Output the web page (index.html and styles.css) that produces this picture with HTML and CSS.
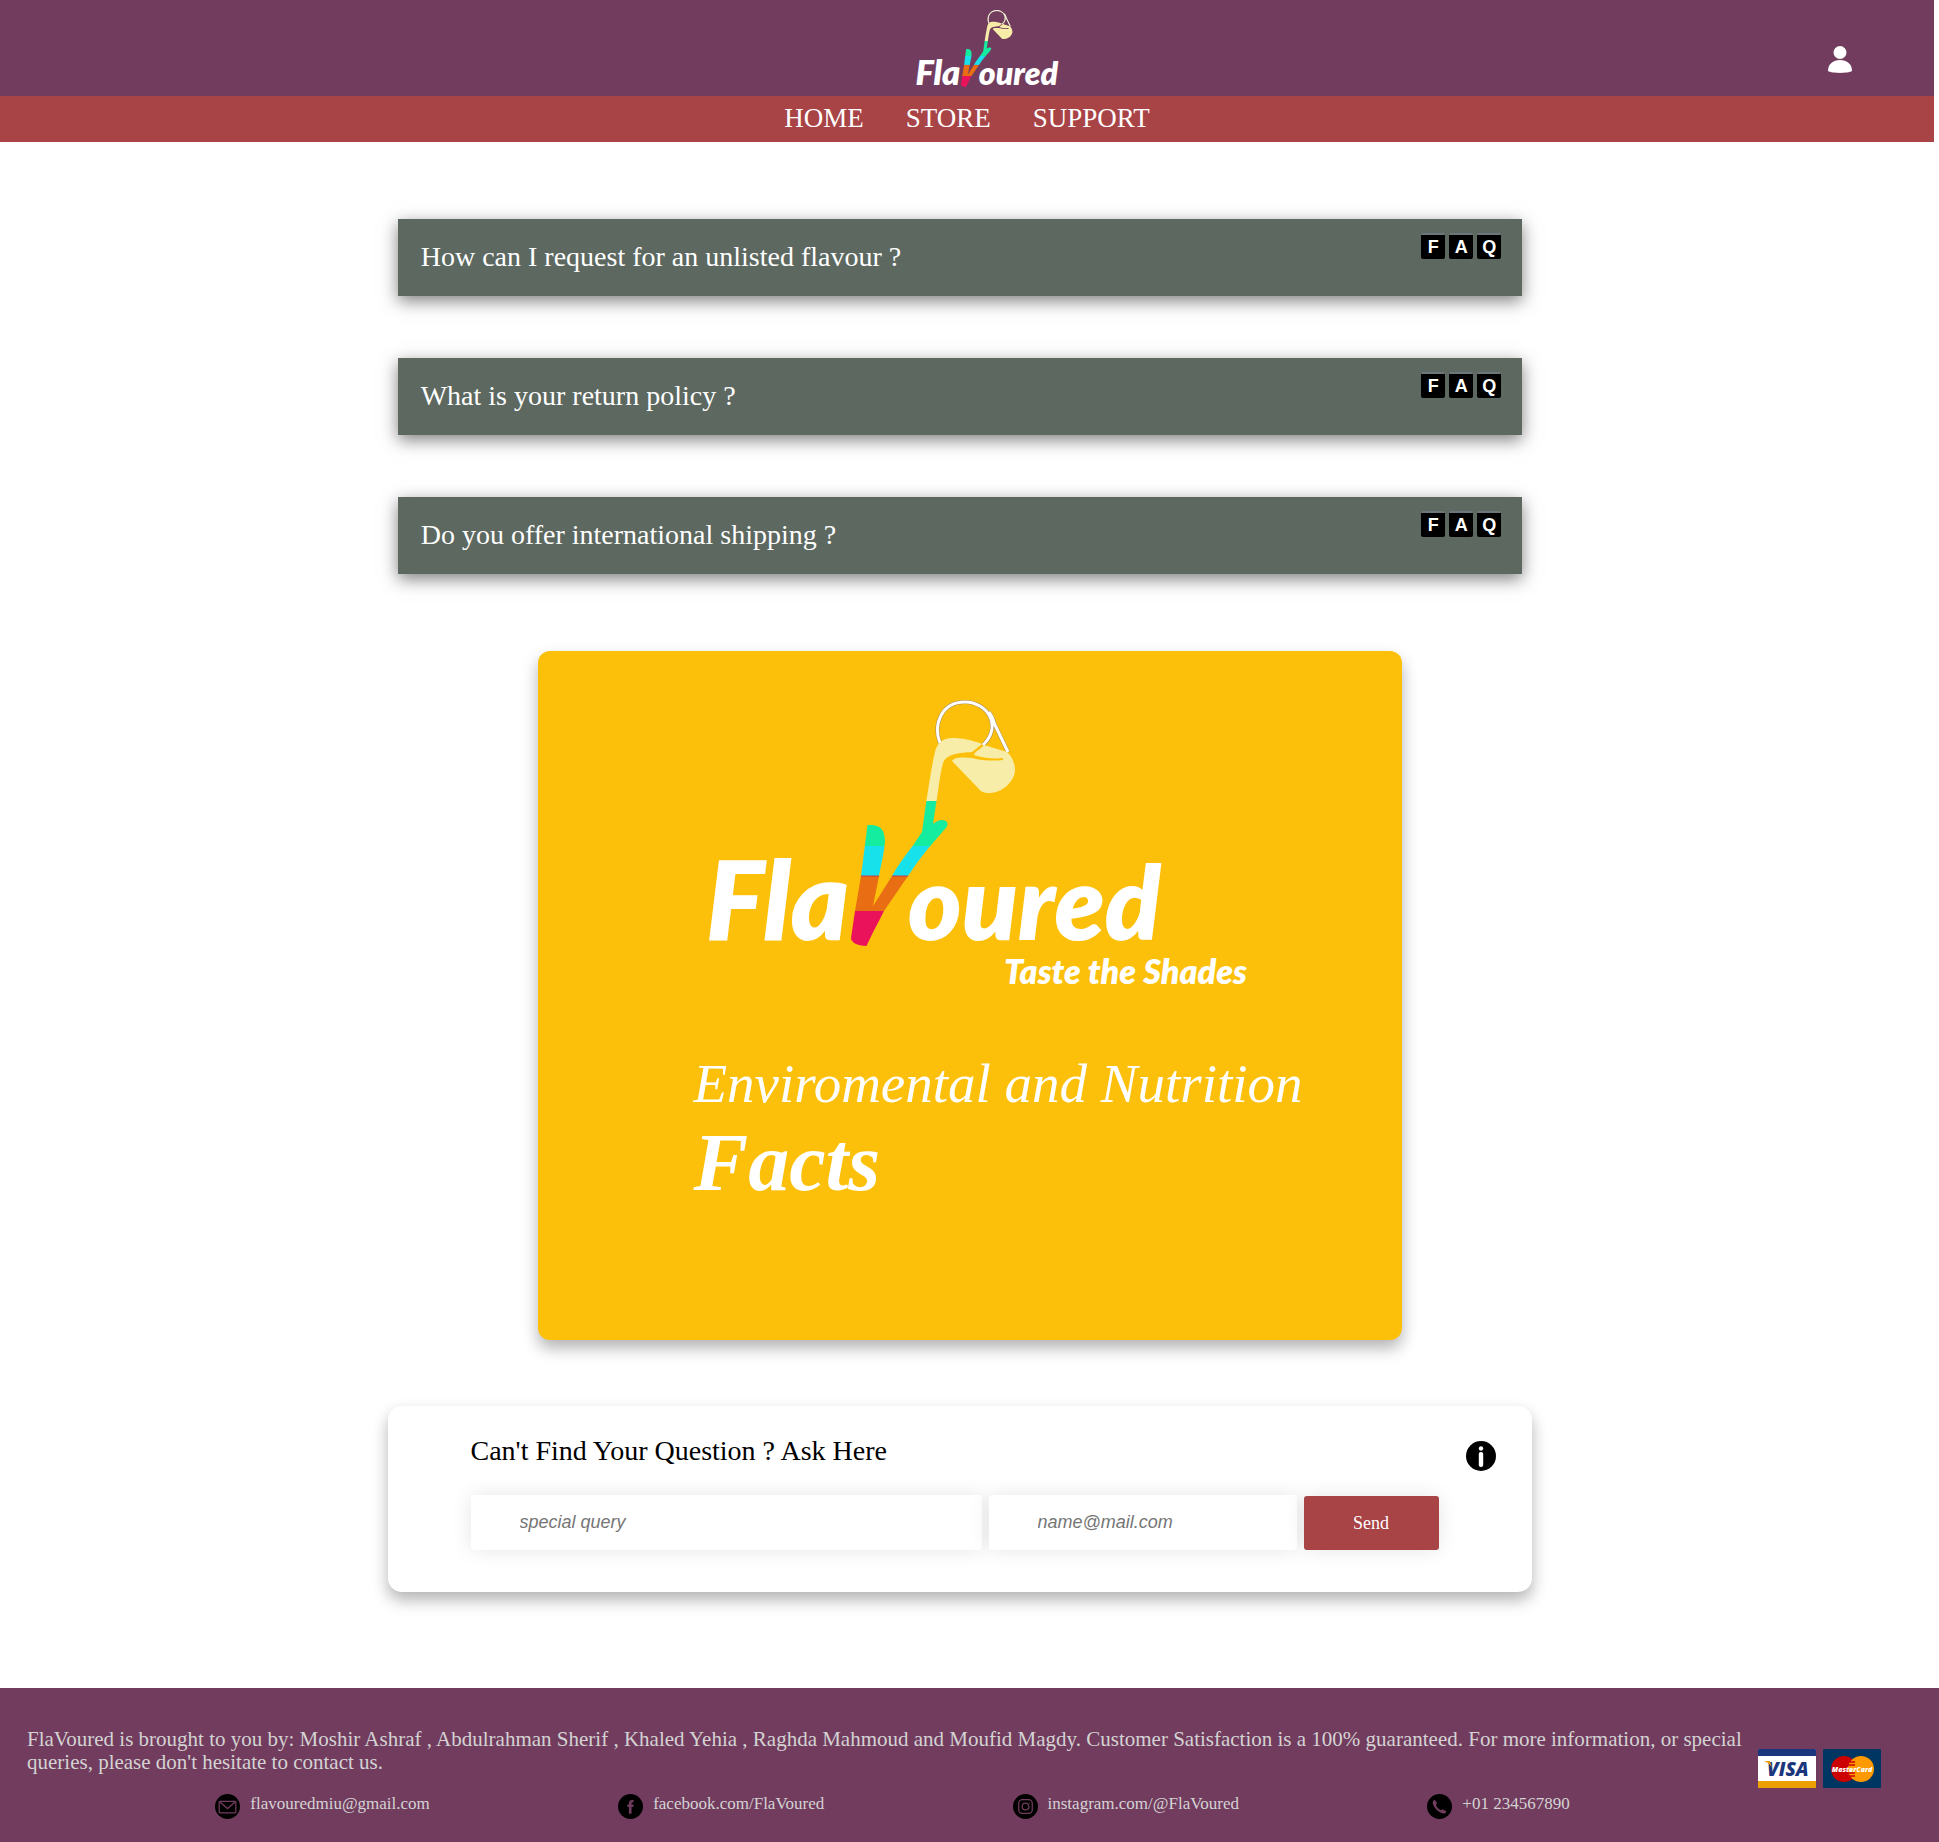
FILE: index.html
```html
<!DOCTYPE html>
<html lang="en">
<head>
<meta charset="utf-8">
<title>FlaVoured - Support</title>
<link rel="stylesheet" href="styles.css">
</head>
<body>
<svg class="sprite" width="0" height="0" aria-hidden="true">
  <defs>
    <linearGradient id="bands" gradientUnits="userSpaceOnUse" x1="0" y1="0" x2="0" y2="260">
      <stop offset="0.41" stop-color="#f8eda8"/>
      <stop offset="0.41" stop-color="#14eca0"/>
      <stop offset="0.583" stop-color="#14eca0"/>
      <stop offset="0.583" stop-color="#17e2ec"/>
      <stop offset="0.7" stop-color="#17e2ec"/>
      <stop offset="0.7" stop-color="#e86d13"/>
      <stop offset="0.833" stop-color="#e86d13"/>
      <stop offset="0.833" stop-color="#ea125a"/>
    </linearGradient>
    <symbol id="wordmark" viewBox="0 0 562 300" overflow="visible">
      <path fill="none" stroke="#a08a60" stroke-width="4" d="M240 49C233 31 241 8 265 8C287 8 303 32 283 51M289 18C292 22 294 27 295 31L308 58"/>
      <path fill="none" stroke="#fff" stroke-width="3" d="M240 49C233 31 241 8 265 8C287 8 303 32 283 51M289 18C292 22 294 27 295 31L308 58"/>
      <path fill="url(#bands)" d="M167.500 131C180 130 185 135 185 148C184 160 181 170 179 182L173 212L192 182C200 168 206 161 214 150L222 138L226.500 106C229 91 231 76 234.500 60C237 48 243 44 253 44C261 44 272 46 282 50L272 58C260 59 247 59 243 69C240 80 239 92 236.500 107L233 130C238 126 242 125 246 127C249 130 247 133 244 136C236 146 226 155 208 182L184 217C177 231 172 240 166.500 252C159 252 151 249 151 244L155 217L161 182Z"/>
      <path fill="#f8eda8" d="M284 51L307 58C312 62 315 70 315 76C315 87 302 99 290 99C283 99 280 97 278 94L252 67C254 63 264 63 272 64C283 67 294 67 303 66L303 64C293 65 283 64 274 61C274 58 280 56 284 51Z"/>
      <path stroke="#c23f4a" stroke-width="1" d="M161 182H179M192 182H208"/>
      <text class="logo-name logo-start" x="6" y="246">Fla</text>
      <text class="logo-name" x="208" y="246">oured</text>
    </symbol>
  </defs>
</svg>

<header class="site-header">
  <div class="brand-bar">
    <a class="brand" href="#" aria-label="FlaVoured home"><svg class="brand-logo" viewBox="0 0 468 258"><use href="#wordmark" width="562" height="300"/></svg></a>
    <a class="account" href="#" aria-label="Account"><svg width="24" height="28" viewBox="0 0 24 28" fill="#fff"><circle cx="12" cy="6.500" r="6.500"/><path d="M0 25C0 18 5 14 12 14S24 18 24 25C20 27.500 4 27.500 0 25Z"/></svg></a>
  </div>
  <nav class="main-nav">
    <a href="#">HOME</a>
    <a href="#">STORE</a>
    <a href="#">SUPPORT</a>
  </nav>
</header>

<main>
  <section class="faq-list">
    <button class="faq" type="button"><span>How can I request for an unlisted flavour ?</span><span class="tiles"><b>F</b><b>A</b><b>Q</b></span></button>
    <button class="faq" type="button"><span>What is your return policy ?</span><span class="tiles"><b>F</b><b>A</b><b>Q</b></span></button>
    <button class="faq" type="button"><span>Do you offer international shipping ?</span><span class="tiles"><b>F</b><b>A</b><b>Q</b></span></button>
  </section>

  <section class="facts">
    <svg class="facts-logo" viewBox="0 0 562 300" role="img" aria-label="FlaVoured, Taste the Shades"><use href="#wordmark" width="562" height="300"/><text class="logo-tag" x="304" y="290">Taste the Shades</text></svg>
    <h2 class="facts-title">Enviromental and Nutrition <strong>Facts</strong></h2>
  </section>

  <section class="ask">
    <div class="ask-head">
      <h2>Can't Find Your Question ? Ask Here</h2>
      <svg class="info" width="30" height="30" viewBox="0 0 30 30"><circle cx="15" cy="15" r="15"/><circle cx="15" cy="7.500" r="2.200" fill="#fff"/><rect x="12.800" y="11" width="4.400" height="15" rx="2" fill="#fff"/></svg>
    </div>
    <form class="ask-form">
      <input type="text" placeholder="special query" aria-label="Special query">
      <input type="email" placeholder="name@mail.com" aria-label="Email address">
      <button type="submit">Send</button>
    </form>
  </section>
</main>

<footer class="site-footer">
  <div class="footer-info">
    <p>FlaVoured is brought to you by: Moshir Ashraf , Abdulrahman Sherif , Khaled Yehia , Raghda Mahmoud and Moufid Magdy. Customer Satisfaction is a 100% guaranteed. For more information, or special queries, please don't hesitate to contact us.</p>
    <ul class="contacts">
      <li><svg viewBox="0 0 24 24"><circle cx="12" cy="12" r="12"/><g class="glyph"><rect x="4" y="7" width="16" height="11" rx="1"/><path d="M5 8L12 14L19 8"/></g></svg><a href="#">flavouredmiu@gmail.com</a></li>
      <li><svg viewBox="0 0 24 24"><circle cx="12" cy="12" r="12"/><path fill="#723c5e" d="M10.500 19V12.500H9V10H10.500V8.500C10.500 6.500 12 5.500 15 5.800V8C13.500 7.900 13 8.200 13 9V10H15L14.700 12.500H13V19Z"/></svg><a href="#">facebook.com/FlaVoured</a></li>
      <li><svg viewBox="0 0 24 24"><circle cx="12" cy="12" r="12"/><g class="glyph"><rect x="5.500" y="5.500" width="13" height="13" rx="3.500"/><circle cx="12" cy="12" r="3.200"/><path d="M15.500 8.300H16"/></g></svg><a href="#">instagram.com/@FlaVoured</a></li>
      <li><svg viewBox="0 0 24 24"><circle cx="12" cy="12" r="12"/><path fill="#723c5e" d="M7.500 5.500L9.500 8.500C9.800 9.500 8.500 10 8.700 10.700C9.500 12.700 11.200 14.500 13.200 15.500C14 15.800 14.500 14.500 15.300 14.800L18.500 16.500C18.500 18.500 16.500 19 15 18.500C10.500 17 6.500 13 5.500 9C5.200 7.500 6 6 7.500 5.500Z"/></svg><a href="#">+01 234567890</a></li>
    </ul>
  </div>
  <div class="payments">
    <svg viewBox="0 0 58 39" role="img" aria-label="Visa"><rect width="58" height="39" rx="1" fill="#fff"/><path fill="#1b367c" d="M0 7V1Q0 0 1 0H57Q58 0 58 1V7Z"/><path fill="#eb9f00" d="M0 32H58V38Q58 39 57 39H1Q0 39 0 38Z"/><text class="visa" x="9" y="27">VISA</text><path fill="#eb9f00" d="M6 12H12L14 19Q12 14 6 12Z"/></svg>
    <svg viewBox="0 0 58 39" role="img" aria-label="MasterCard"><rect width="58" height="39" rx="1" fill="#003662"/><circle cx="21" cy="20" r="13" fill="#c00"/><circle cx="38" cy="20" r="13" fill="#f90"/><path stroke="#c00" stroke-width="1.500" d="M26 13H32M25 16H32M25 24H32M26 27H32"/><text class="mastercard" x="29" y="23" text-anchor="middle">MasterCard</text></svg>
  </div>
</footer>
</body>
</html>
```
FILE: styles.css
```css
* { box-sizing: border-box; }

body {
  margin: 0;
  background: #fff;
  color: #000;
  font-family: "Liberation Serif", "Times New Roman", serif;
}

a { color: inherit; text-decoration: none; }
h2, p, ul { margin: 0; padding: 0; font-weight: normal; }
svg { display: block; flex-shrink: 0; }

/* Logo lettering */
.logo-name, .logo-tag {
  fill: #fff;
  font-family: Lato, sans-serif;
  font-style: italic;
  font-weight: 800;
}
.logo-name { font-size: 102px; }
.logo-start { font-size: 110px; }
.logo-tag { font-size: 34px; }

/* Header */
.site-header { margin-right: 5px; }

.brand-bar {
  display: grid;
  grid-template-columns: 1fr auto 1fr;
  align-items: center;
  height: 96px;
  padding-left: 39px;
  background: #723c5e;
}
.brand { grid-column: 2; }
.brand-logo { width: 148px; height: 81px; }
.account { justify-self: end; margin: 23px 82px 0 0; }

.main-nav {
  display: flex;
  justify-content: center;
  gap: 42px;
  padding: 7px 0 8px;
  background: #a84346;
  color: #fff;
  font-size: 27px;
  line-height: 31px;
}

/* Questions */
main {
  display: flex;
  flex-direction: column;
  align-items: center;
  padding: 77px 0 96px;
}

.faq-list {
  display: flex;
  flex-direction: column;
  gap: 62px;
  width: 58%;
  margin-right: 19px;
}

.faq {
  display: flex;
  justify-content: space-between;
  padding: 14px 21px 31px 23px;
  border: 0;
  background: #5c6860;
  box-shadow: 0 5px 16px rgba(0, 0, 0, 0.5);
  color: #fff;
  font: 28px/32px "Liberation Serif", "Times New Roman", serif;
  text-align: left;
}
.faq > span:first-child { padding-top: 8px; margin-bottom: -8px; }

.tiles { display: flex; gap: 4px; }
.tiles b {
  width: 24px;
  height: 26px;
  border-top: 2px solid #6d777b;
  border-radius: 2px;
  background: #000;
  font: bold 18px/25px "Liberation Sans", Arial, sans-serif;
  text-align: center;
}

/* Facts banner */
.facts {
  width: 100%;
  max-width: 864px;
  margin-top: 77px;
  padding: 43px 80px 135px 156px;
  border-radius: 12px;
  background: #fdc00a;
  box-shadow: 0 8px 16px rgba(0, 0, 0, 0.3);
  color: #fff;
}
.facts-logo { width: 562px; height: 300px; margin-left: 6px; }
.facts-title {
  margin-top: 58px;
  font-size: 55px;
  font-style: italic;
  line-height: 64px;
}
.facts-title strong { display: block; padding-top: 5px; font-size: 82px; line-height: 84px; }

/* Ask form */
.ask {
  width: 59%;
  margin: 66px 20px 0 0;
  padding: 27px 36px 42px 83px;
  border-radius: 14px;
  background: #fff;
  box-shadow: 0 8px 16px rgba(0, 0, 0, 0.3);
}
.ask-head {
  display: flex;
  align-items: flex-start;
  justify-content: space-between;
  margin-bottom: 24px;
}
.ask-head h2 { font-size: 28px; line-height: 35px; }
.info { margin-top: 8px; }

.ask-form {
  display: grid;
  grid-template-columns: 511fr 308fr 135fr;
  align-items: end;
  gap: 7px;
  margin-right: 57px;
}
.ask-form input,
.ask-form button {
  min-width: 0;
  height: 55px;
  border: 0;
  border-radius: 3px;
  box-shadow: 0 0 20px rgba(0, 0, 0, 0.1);
}
.ask-form input {
  padding: 0 49px;
  background: #fff;
  font: italic 18px/20px "Liberation Sans", Arial, sans-serif;
}
.ask-form input::placeholder { color: #757575; }
.ask-form button {
  height: 54px;
  background: #a84346;
  color: #fff;
  font: 18px/20px "Liberation Serif", "Times New Roman", serif;
}

/* Footer */
.site-footer {
  display: flex;
  align-items: center;
  padding: 40px 58px 23px 27px;
  background: #723c5e;
  color: #d3d3d3;
}
.footer-info { flex: 1; }
.footer-info p { font-size: 21px; line-height: 23px; }

.contacts {
  display: flex;
  justify-content: space-evenly;
  margin-top: 20px;
  list-style: none;
  font-size: 17px;
  line-height: 20px;
}
.contacts li { display: flex; gap: 10px; }
.contacts svg { width: 25px; height: 25px; }
.glyph { fill: none; stroke: #723c5e; stroke-width: 1.2px; }

.payments { display: flex; gap: 7px; margin-bottom: 10px; }
.payments svg { width: 58px; height: 39px; }
.visa, .mastercard {
  font-family: "Open Sans", sans-serif;
  font-style: italic;
  font-weight: 800;
}
.visa { fill: #1b367c; font-size: 19px; }
.mastercard { fill: #fff; font-size: 7px; }
```
